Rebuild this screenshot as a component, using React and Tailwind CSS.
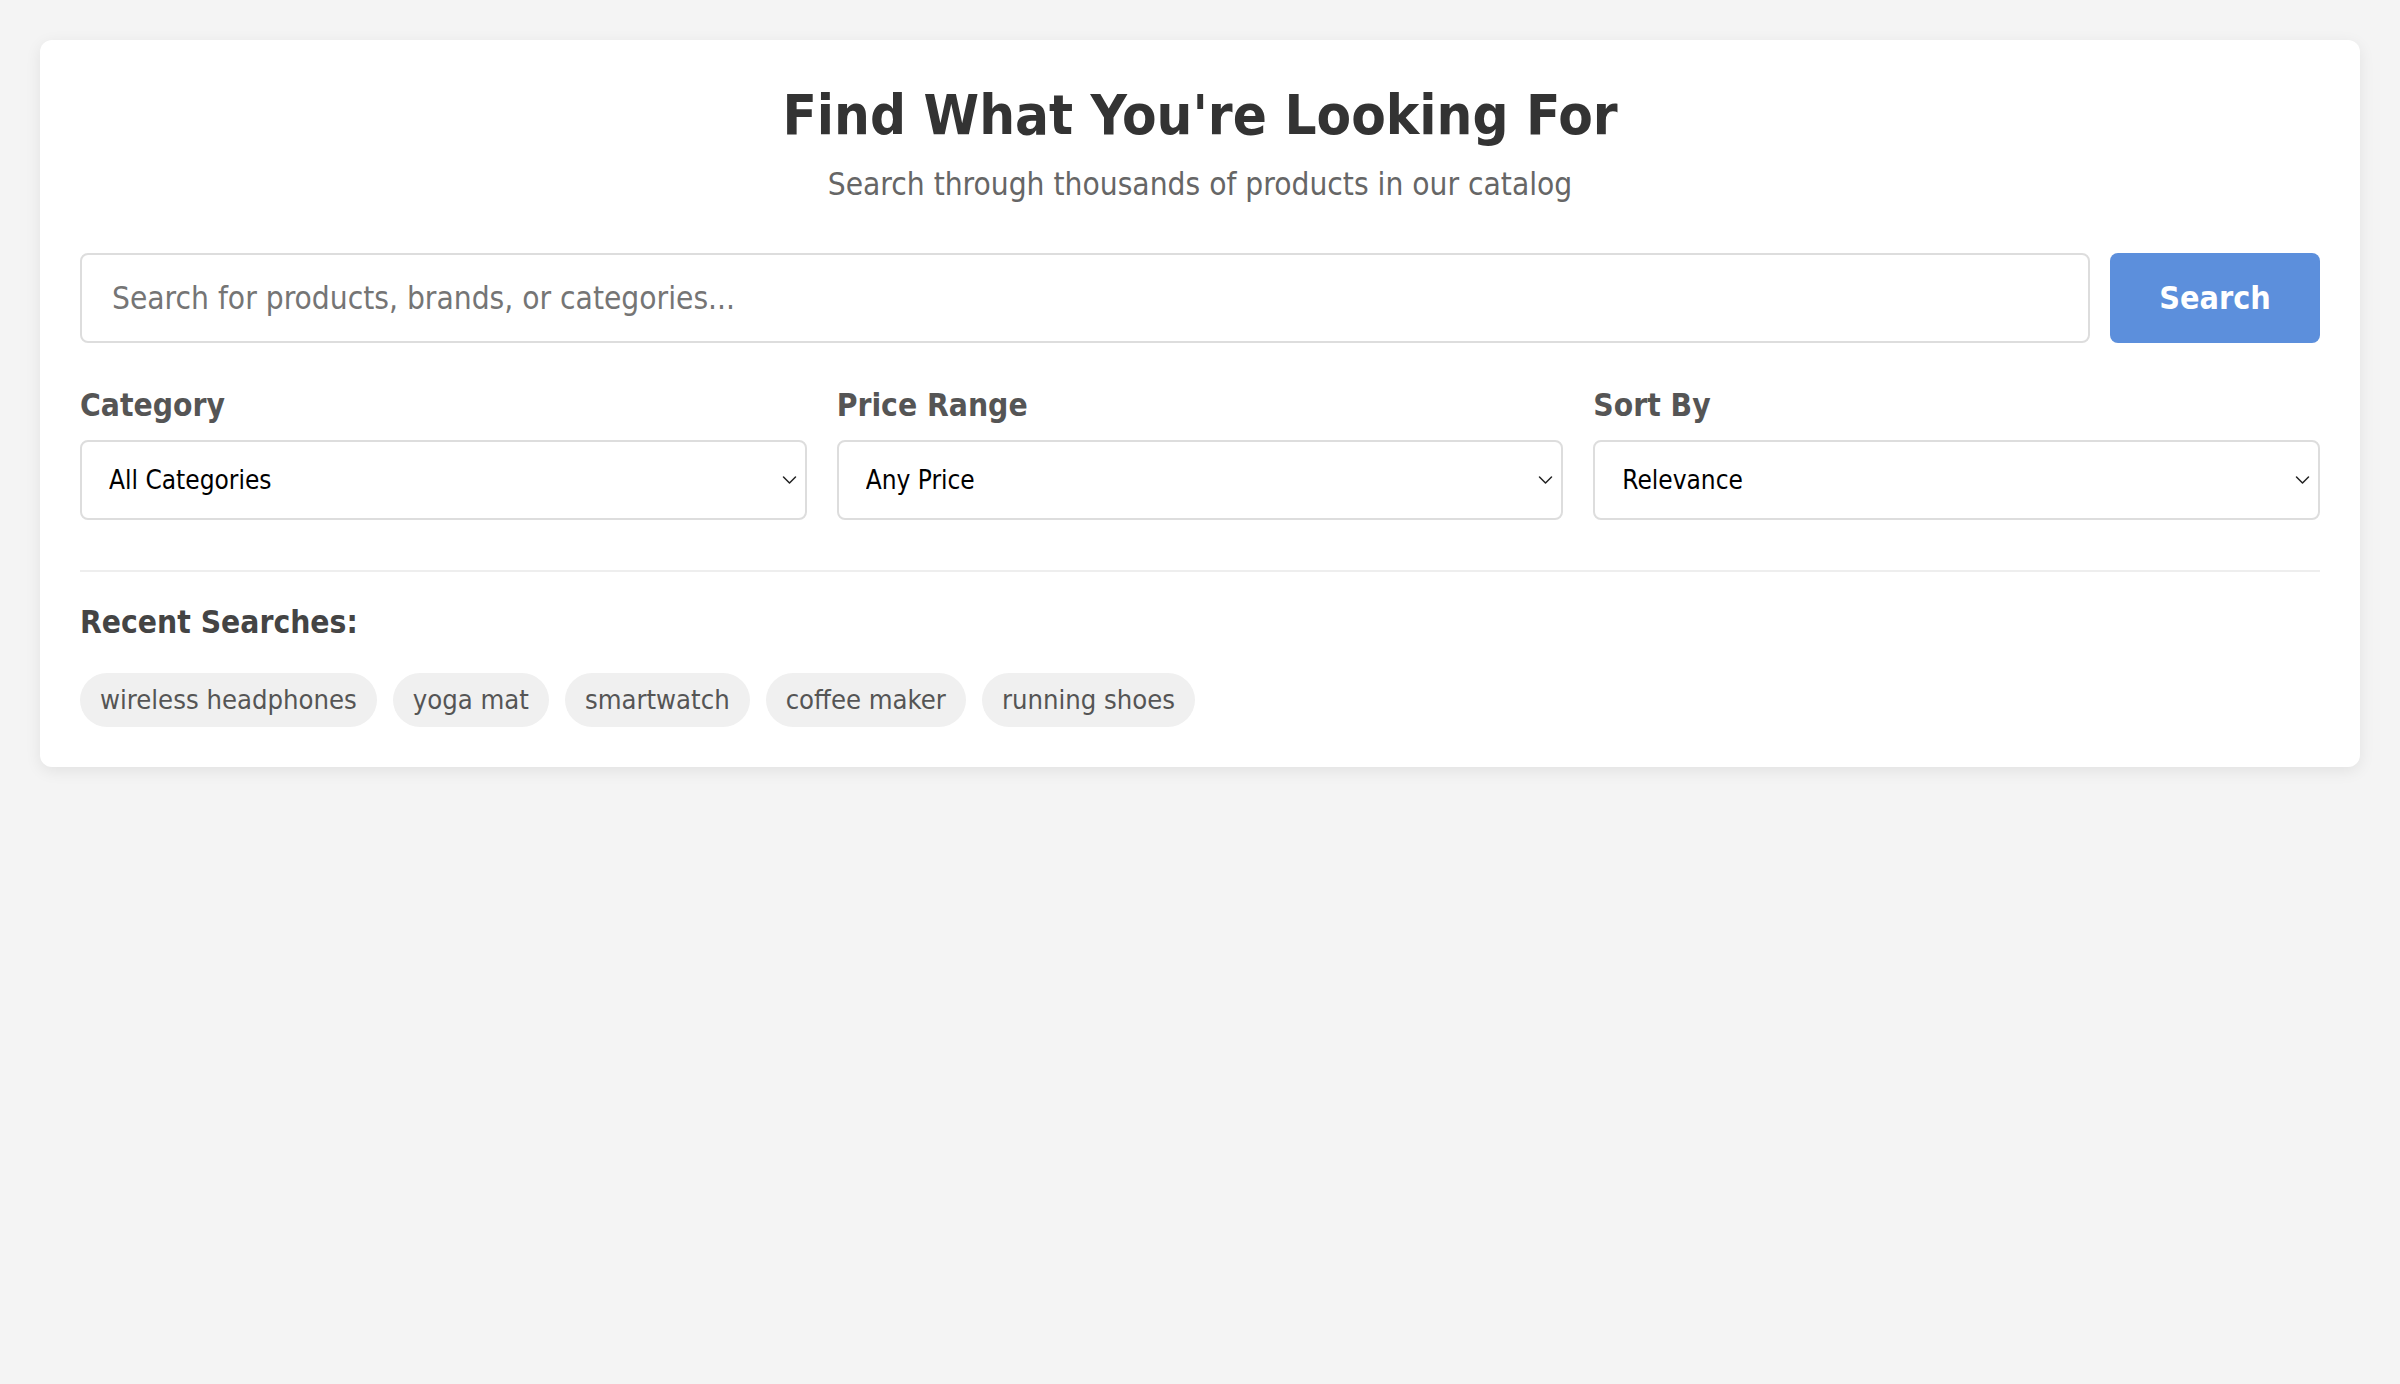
import React from "react";

const Chevron = () => (
  <svg className="pointer-events-none absolute right-[10px] top-1/2 -translate-y-1/2" width="15" height="9" viewBox="0 0 15 9" fill="none">
    <path d="M1.5 1.5 L7.5 7.5 L13.5 1.5" stroke="#222" strokeWidth="1.5" strokeLinecap="round" strokeLinejoin="round" />
  </svg>
);

function SelectField({ label, value, options }) {
  return (
    <div className="flex flex-col">
      <label className="text-[31.5px] leading-[34px] font-bold text-[#555] mb-[18px]">{label}</label>
      <div className="relative">
        <select
          defaultValue={value}
          className="w-full h-[80px] appearance-none bg-white border-2 border-[#ddd] rounded-[8px] pl-[27px] pr-[40px] text-[26px] text-black outline-none"
          style={{ fontFamily: "inherit" }}
        >
          {options.map((o) => (
            <option key={o}>{o}</option>
          ))}
        </select>
        <Chevron />
      </div>
    </div>
  );
}

export default function App() {
  const recent = ["wireless headphones", "yoga mat", "smartwatch", "coffee maker", "running shoes"];
  return (
    <div
      className="min-h-[1384px] w-full bg-[#f4f4f4] pt-[40px] px-[40px]"
      style={{ fontFamily: '"DejaVu Sans Condensed", "DejaVu Sans", Tahoma, Verdana, sans-serif' }}
    >
      <div className="bg-white rounded-[12px] shadow-[0_4px_16px_rgba(0,0,0,0.08)] p-[40px]">
        <h1 className="text-center text-[56px] leading-[70px] font-bold text-[#333]">
          Find What You're Looking For
        </h1>
        <p className="text-center text-[31.4px] leading-[40px] text-[#666] mt-[14px]">
          Search through thousands of products in our catalog
        </p>

        <div className="flex gap-[20px] mt-[49px]">
          <input
            type="text"
            placeholder="Search for products, brands, or categories..."
            className="flex-1 h-[90px] border-2 border-[#ddd] rounded-[8px] pl-[30px] text-[31.4px] text-[#333] placeholder:text-[#757575] outline-none"
            style={{ fontFamily: "inherit" }}
          />
          <button
            className="w-[210px] h-[90px] bg-[#5c8fdc] rounded-[8px] text-white text-[32px] font-bold"
            style={{ fontFamily: "inherit" }}
          >
            Search
          </button>
        </div>

        <div className="grid grid-cols-3 gap-[30px] mt-[45px]">
          <SelectField label="Category" value="All Categories" options={["All Categories", "Electronics", "Home & Kitchen", "Sports", "Fashion"]} />
          <SelectField label="Price Range" value="Any Price" options={["Any Price", "Under $25", "$25 - $50", "$50 - $100", "Over $100"]} />
          <SelectField label="Sort By" value="Relevance" options={["Relevance", "Price: Low to High", "Price: High to Low", "Newest"]} />
        </div>

        <div className="h-[2px] bg-[#eee] mt-[50px]" />

        <h3 className="text-[31.5px] leading-[34px] font-bold text-[#444] mt-[33px]">Recent Searches:</h3>
        <div className="flex flex-wrap gap-[16px] mt-[34px]">
          {recent.map((r) => (
            <span
              key={r}
              className="h-[54px] flex items-center px-[20px] rounded-full bg-[#f0f0f0] text-[#555] text-[27.2px]"
            >
              {r}
            </span>
          ))}
        </div>
      </div>
    </div>
  );
}
